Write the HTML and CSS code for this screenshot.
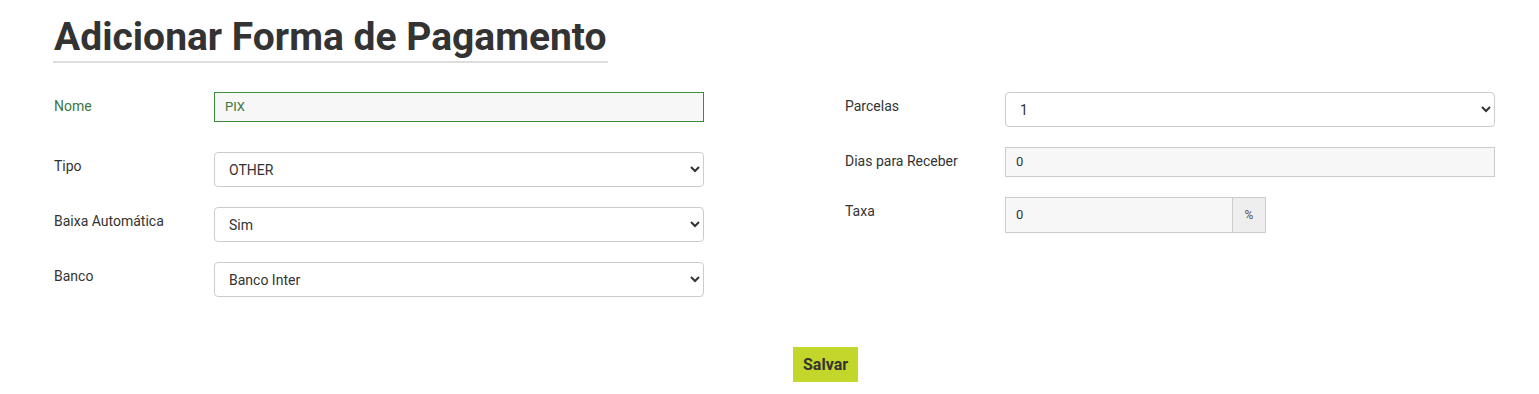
FILE: index.html
```html
<!DOCTYPE html>
<html lang="pt-BR">
<head>
    <meta charset="UTF-8">
    <meta name="viewport" content="width=device-width, initial-scale=1.0">
    <title>Adicionar Forma de Pagamento</title>
    <link rel="stylesheet" href="styles.css">
</head>
<body>
    <div class="page">
        <h1 class="page-title">Adicionar Forma de Pagamento</h1>

        <form id="paymentForm" class="payment-form">
            <div class="form-col">
                <div class="form-row form-row-success">
                    <label for="nome">Nome</label>
                    <input type="text" id="nome" class="field field-flat" value="PIX">
                </div>
                <div class="form-row">
                    <label for="tipo">Tipo</label>
                    <select id="tipo" class="field field-select">
                        <option>OTHER</option>
                    </select>
                </div>
                <div class="form-row">
                    <label for="baixa">Baixa Automática</label>
                    <select id="baixa" class="field field-select">
                        <option>Sim</option>
                        <option>Não</option>
                    </select>
                </div>
                <div class="form-row">
                    <label for="banco">Banco</label>
                    <select id="banco" class="field field-select">
                        <option>Banco Inter</option>
                    </select>
                </div>
            </div>

            <div class="form-col">
                <div class="form-row">
                    <label for="parcelas">Parcelas</label>
                    <select id="parcelas" class="field field-select">
                        <option>1</option>
                    </select>
                </div>
                <div class="form-row">
                    <label for="dias">Dias para Receber</label>
                    <input type="text" id="dias" class="field field-flat" value="0">
                </div>
                <div class="form-row">
                    <label for="taxa">Taxa</label>
                    <div class="input-group">
                        <input type="text" id="taxa" class="field field-flat" value="0">
                        <span class="addon">%</span>
                    </div>
                </div>
            </div>
        </form>

        <div class="actions">
            <button type="button" class="btn-save">Salvar</button>
        </div>
    </div>
</body>
</html>
```

FILE: styles.css
```css
body {
    font-family: Roboto, "Liberation Sans", Arial, sans-serif;
    font-size: 14px;
    color: #333;
    background-color: #fff;
    margin: 0;
    padding: 0;
}

.page {
    padding: 16px 0 0 54px;
}

.page-title {
    display: inline-block;
    margin: 0 0 0 -1px;
    padding: 0 1px 2px 1px;
    font-size: 39px;
    font-weight: 700;
    line-height: 1.1;
    color: #333;
    border-bottom: 2px solid #ddd;
}

.payment-form {
    display: grid;
    grid-template-columns: 650px 650px;
    column-gap: 141px;
    margin-top: 29px;
}

.form-row {
    display: flex;
    align-items: flex-start;
    margin-bottom: 20px;
}

.form-row label {
    width: 160px;
    flex: none;
    padding-top: 4px;
    line-height: 20px;
}

.form-row-success {
    margin-bottom: 30px;
}

.form-row-success label {
    color: #3c763d;
}

.field {
    width: 490px;
    box-sizing: border-box;
    font-family: inherit;
    font-size: 14px;
    color: #333;
    border: 1px solid #ccc;
    margin: 0;
}

.field-flat {
    height: 30px;
    padding: 0 10px;
    font-size: 13px;
    background-color: #f7f7f7;
    border-radius: 0;
}

.form-row-success .field-flat {
    border-color: #3d8b3d;
    color: #3c763d;
}

.field-select {
    height: 35px;
    padding: 7px 10px 6px;
    background-color: #fff;
    border-radius: 4px;
}

.input-group {
    display: flex;
}

.input-group .field-flat {
    width: 228px;
    height: 36px;
}

.input-group .addon {
    width: 33px;
    height: 36px;
    box-sizing: border-box;
    display: flex;
    align-items: center;
    justify-content: center;
    background-color: #eee;
    border: 1px solid #ccc;
    border-left: none;
    font-size: 12px;
    color: #555;
}

.actions {
    padding-left: 739px;
    margin-top: 30px;
}

.btn-save {
    height: 35px;
    padding: 0 10px;
    font-family: inherit;
    font-size: 16px;
    font-weight: 700;
    color: #333;
    background-color: #c3d62b;
    border: none;
    border-radius: 0;
    cursor: pointer;
}
```
